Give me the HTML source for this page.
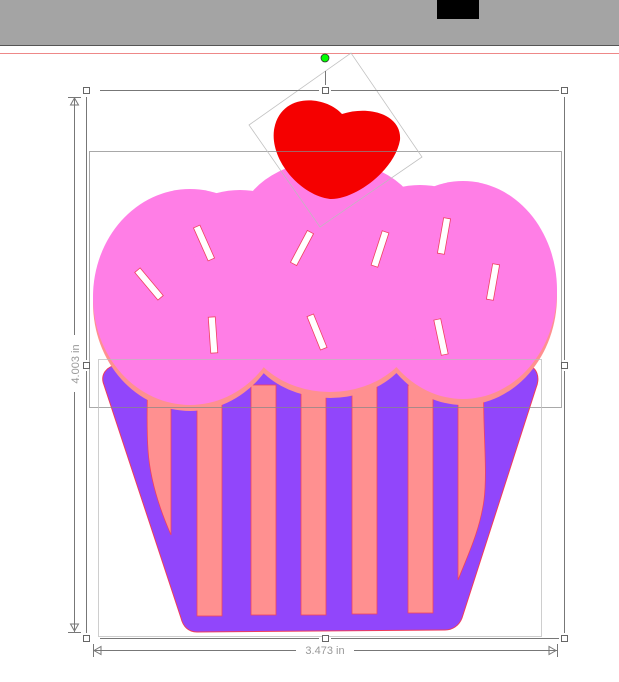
<!DOCTYPE html>
<html><head><style>
html,body{margin:0;padding:0;background:#fff;width:619px;height:682px;overflow:hidden}
svg{display:block}
</style></head><body>
<svg width="619" height="682" viewBox="0 0 619 682" xmlns="http://www.w3.org/2000/svg">
<defs>
<g id="fr">
<ellipse cx="190" cy="297" rx="97" ry="108"/>
<ellipse cx="330" cy="228" rx="92" ry="68"/>
<ellipse cx="463" cy="290" rx="94" ry="109"/>
<ellipse cx="330" cy="320" rx="88" ry="72"/>
<ellipse cx="240" cy="230" rx="60" ry="40"/>
<ellipse cx="420" cy="225" rx="60" ry="40"/>
</g>
</defs>
<rect x="0" y="0" width="619" height="45" fill="#a4a4a4"/>
<line x1="0" y1="45.5" x2="619" y2="45.5" stroke="#555" stroke-width="1"/>
<rect x="437" y="0" width="42" height="19" fill="#000"/>
<line x1="0" y1="53.5" x2="619" y2="53.5" stroke="#e88" stroke-width="1"/>

<!-- wrapper -->
<path d="M118,365 L525,365 C538,366 540,378 536,388 L462,618 C459,626 452,630 445,630 L197,632 C188,632 183,626 181,618 L104,385 C100,375 106,366 118,365 Z" fill="#9146fb" stroke="#f03c5a" stroke-width="1"/>
<g fill="#ff9090" stroke="#f04060" stroke-width="0.8">
<path d="M147,380 L171,380 L171,535 C160,510 150,480 148,450 C146,420 148,400 147,380 Z"/>
<rect x="197" y="385" width="25" height="231"/>
<rect x="251" y="385" width="25" height="230"/>
<rect x="301" y="385" width="25" height="230"/>
<rect x="352" y="385" width="25" height="229"/>
<rect x="408" y="385" width="25" height="228"/>
<path d="M458,380 L484,380 C482,420 488,470 484,500 C480,530 468,555 458,580 Z"/>
</g>

<!-- frosting -->
<use href="#fr" fill="#ff9090" transform="translate(0,6)"/>
<use href="#fr" fill="#ff7ee6"/>

<!-- sprinkles -->
<g fill="#fff" stroke="#f04060" stroke-width="0.8">
<rect x="-3.5" y="-18" width="7" height="36" transform="translate(204,243) rotate(-24)"/>
<rect x="-3.5" y="-18" width="7" height="36" transform="translate(149,284) rotate(-40)"/>
<rect x="-3.5" y="-18" width="7" height="36" transform="translate(302,248) rotate(28)"/>
<rect x="-3.5" y="-18" width="7" height="36" transform="translate(380,249) rotate(18)"/>
<rect x="-3.5" y="-18" width="7" height="36" transform="translate(444,236) rotate(10)"/>
<rect x="-3.5" y="-18" width="7" height="36" transform="translate(493,282) rotate(10)"/>
<rect x="-3.5" y="-18" width="7" height="36" transform="translate(213,335) rotate(-4)"/>
<rect x="-3.5" y="-18" width="7" height="36" transform="translate(317,332) rotate(-22)"/>
<rect x="-3.5" y="-18" width="7" height="36" transform="translate(441,337) rotate(-12)"/>
</g>

<!-- heart -->
<path d="M342,114 C325,95 280,92 274,130 C270,160 300,195 330,199 C355,200 395,170 400,140 C402,115 370,105 342,114 Z" fill="#f50000"/>

<!-- selection boxes -->
<g fill="none" stroke="#888" stroke-width="0.8" opacity="0.9">
<rect x="89.5" y="151.5" width="472" height="256"/>
<rect x="98.5" y="359.5" width="443" height="277" stroke="#bbb"/>
<polygon points="249,125 351,53 422,157 320,227" stroke="#bbb"/>
</g>
<g stroke="#777" stroke-width="1" fill="none">
<line x1="100" y1="90.5" x2="319" y2="90.5"/>
<line x1="331" y1="90.5" x2="559" y2="90.5"/>
<line x1="325.5" y1="71" x2="325.5" y2="85"/>
<line x1="86.5" y1="97" x2="86.5" y2="360"/>
<line x1="86.5" y1="371" x2="86.5" y2="633"/>
<line x1="564.5" y1="97" x2="564.5" y2="360"/>
<line x1="564.5" y1="371" x2="564.5" y2="633"/>
<line x1="100" y1="638.5" x2="319" y2="638.5"/>
<line x1="331" y1="638.5" x2="559" y2="638.5"/>
<line x1="74.5" y1="97" x2="74.5" y2="335"/>
<line x1="74.5" y1="392" x2="74.5" y2="632"/>
<line x1="68" y1="97.5" x2="81" y2="97.5"/>
<line x1="68" y1="632.5" x2="81" y2="632.5"/>
<polygon points="74.5,98 70.5,105 78.5,105"/>
<polygon points="74.5,631 70.5,624 78.5,624"/>
<line x1="93" y1="650.5" x2="296" y2="650.5"/>
<line x1="354" y1="650.5" x2="557" y2="650.5"/>
<line x1="93.5" y1="644" x2="93.5" y2="657"/>
<line x1="557.5" y1="644" x2="557.5" y2="657"/>
<polygon points="94,650.5 101,646.5 101,654.5"/>
<polygon points="556,650.5 549,646.5 549,654.5"/>
</g>
<g fill="#fff" stroke="#666" stroke-width="1">
<rect x="83.5" y="87.5" width="6" height="6"/>
<rect x="322.5" y="87.5" width="6" height="6"/>
<rect x="561.5" y="87.5" width="6" height="6"/>
<rect x="83.5" y="362.5" width="6" height="6"/>
<rect x="561.5" y="362.5" width="6" height="6"/>
<rect x="83.5" y="635.5" width="6" height="6"/>
<rect x="322.5" y="635.5" width="6" height="6"/>
<rect x="561.5" y="635.5" width="6" height="6"/>
</g>
<circle cx="325" cy="58" r="4" fill="#0f0" stroke="#333" stroke-width="0.8"/>
<text x="0" y="0" transform="translate(79,364) rotate(-90)" text-anchor="middle" font-family="Liberation Sans, sans-serif" font-size="11" fill="#999">4.003 in</text>
<text x="325" y="654" text-anchor="middle" font-family="Liberation Sans, sans-serif" font-size="11" fill="#999">3.473 in</text>
</svg>
</body></html>
